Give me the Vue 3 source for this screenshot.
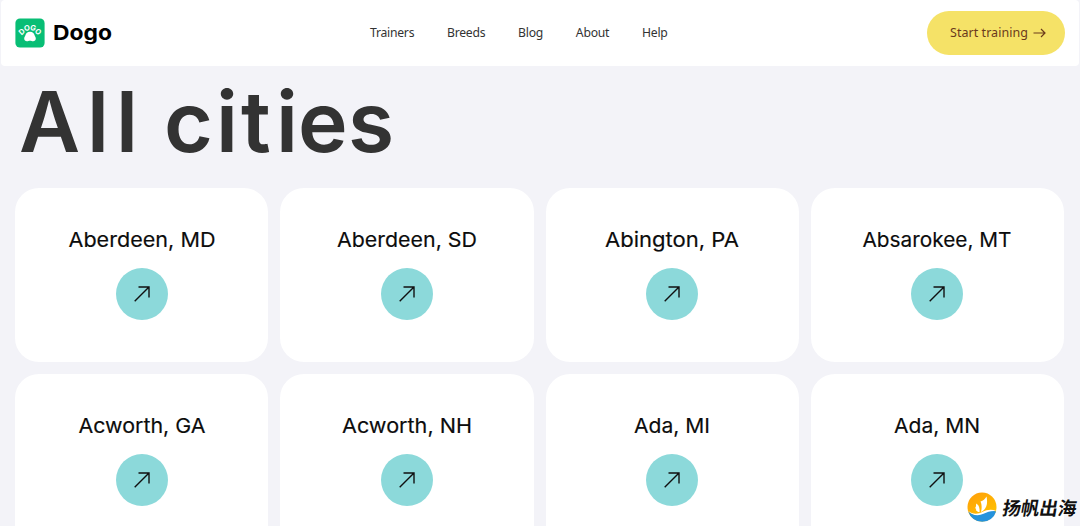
<template>
  <div class="page">
    <header class="header">
      <a class="brand">
        <svg class="brand-logo" viewBox="0 0 30 30">
          <rect x="0.4" y="0.4" width="29.2" height="29.2" rx="4.6" fill="#08be75"/>
          <g class="brand-toes">
            <text
                v-for="(toe, i) in toes"
                :key="i"
                :transform="`translate(${toe.x} ${toe.y}) rotate(${toe.angle})`"
                y="2.7"
            >{{ toe.letter }}</text>
          </g>
          <path
              d="M15 13.8c2.600 0 4 1.400 4.500 3.200c.4 1.300 1.300 2 1.300 3.500c0 1.700-1.200 2.700-2.700 2.700c-1.200 0-1.800-.5-3.100-.5s-1.900.5-3.100.5c-1.500 0-2.700-1-2.700-2.700c0-1.500.9-2.200 1.300-3.500c.5-1.800 1.900-3.200 4.500-3.200z"
              fill="#fff"
          />
        </svg>
        <svg class="brand-name" viewBox="0 0 62 30">
          <text x="0" y="22.2" textLength="59" lengthAdjust="spacingAndGlyphs">Dogo</text>
        </svg>
      </a>
      <nav class="nav">
        <a v-for="link in links" :key="link" class="nav-link">{{ link }}</a>
      </nav>
      <button class="cta">
        <span>Start training</span>
        <svg class="cta-arrow" viewBox="0 0 13 10">
          <path d="M0.5 5h11.500M8 1l4 4l-4 4"/>
        </svg>
      </button>
    </header>

    <main class="content">
      <h1 class="title">
        <svg viewBox="0 0 400 107">
          <text y="71" x="4 72 101 129 149 201 226 261 283 333">All cities</text>
        </svg>
      </h1>
      <section class="grid">
        <article v-for="city in cities" :key="city.name" class="card">
          <svg class="card-name" viewBox="0 0 200 30">
            <text
                x="100"
                y="22.3"
                :textLength="city.width"
                lengthAdjust="spacingAndGlyphs"
            >{{ city.name }}</text>
          </svg>
          <span class="card-button">
            <svg viewBox="0 0 16 16">
              <path d="M0.7 15.3L15 1M4.5 1H15v10.5"/>
            </svg>
          </span>
        </article>
      </section>
    </main>

    <div class="watermark">
      <svg class="watermark-logo" viewBox="0 0 30 30">
        <defs>
          <linearGradient id="sun" x1="0" y1="0" x2="0.6" y2="1">
            <stop offset="0" stop-color="#ff9d0a"/>
            <stop offset="1" stop-color="#ffc400"/>
          </linearGradient>
        </defs>
        <circle cx="15" cy="15" r="14.500" fill="url(#sun)"/>
        <path d="M1.3 19.500c5 4 9.500 4 14.500 1.500c4.500-2.200 8.700-3.200 13.300-1.500a14.500 14.500 0 0 1-27.800 0z" fill="#2492dc"/>
        <path d="M.8 18.500c4.700 4 9.700 4 14.500 1.500c5-2.400 9-3 14-1c-5.300-.5-8.800 .8-12.800 2.800c-5.500 2.700-12 1.500-15.700-3.300z" fill="#fff"/>
        <path d="M19.500 4.500c1.500 7 .3 12.500-5.500 15.500c1-4 .8-8-.5-10.500c2.800-.8 4.500-2.500 6-5z" fill="#fff"/>
        <path d="M9 11.500c2.700 1 4 4.500 3.500 8.800c-1.500-.3-2.800-1-3.800-2.300c.8-1 .5-1.500-.7-1.800c1-1.200 1.300-2.700 1-4.700z" fill="#fff"/>
      </svg>
      <span class="watermark-text">扬帆出海</span>
    </div>
  </div>
</template>

<script setup>

const links = ['Trainers', 'Breeds', 'Blog', 'About', 'Help']

// letters of the logo placed as the toes of the paw
const toes = [
  {letter: 'D', x: 6.7, y: 13.6, angle: -42},
  {letter: 'O', x: 11.9, y: 9.9, angle: -14},
  {letter: 'G', x: 18.1, y: 9.9, angle: 14},
  {letter: 'O', x: 23.3, y: 13.6, angle: 42},
]

const cities = [
  {name: 'Aberdeen, MD', width: 147},
  {name: 'Aberdeen, SD', width: 140},
  {name: 'Abington, PA', width: 134},
  {name: 'Absarokee, MT', width: 149},
  {name: 'Acworth, GA', width: 127},
  {name: 'Acworth, NH', width: 130},
  {name: 'Ada, MI', width: 76},
  {name: 'Ada, MN', width: 86},
]

</script>

<style>
body {
  background-color: #f3f3f8;
}
</style>

<style scoped>

.page {
  position: relative;
  height: 526px;
  overflow: hidden;
  background-color: #f3f3f8;
  font-family: "Noto Sans", sans-serif;
}

.header {
  display: grid;
  grid-template-columns: 355px 1fr auto;
  align-items: center;
  height: 66px;
  margin: 0 1px;
  padding: 0 14px;
  box-sizing: border-box;
  border-radius: 4px;
  background-color: white;
}

.brand {
  display: flex;
  align-items: center;
  gap: 7.5px;
}

.brand-logo {
  width: 30px;
  height: 30px;
}

.brand-toes {
  fill: white;
  font-family: Inter, sans-serif;
  font-size: 7.5px;
  font-weight: 700;
  text-anchor: middle;
}

.brand-name {
  width: 62px;
  height: 30px;
  font-family: Inter, sans-serif;
  font-size: 20.5px;
  font-weight: 700;
}

.nav {
  display: flex;
  gap: 32.8px;
}

.nav-link {
  color: #333;
  font-size: 12.2px;
  letter-spacing: -0.25px;
  line-height: 18px;
}

.cta {
  display: flex;
  align-items: center;
  justify-content: center;
  gap: 5px;
  width: 138px;
  height: 44px;
  padding: 0 0 1px 4px;
  border: none;
  border-radius: 22px;
  background-color: #f5e267;
  color: #6b3a1c;
  font-family: inherit;
  font-size: 12.5px;
  letter-spacing: 0.05px;
}

.cta-arrow {
  width: 13px;
  height: 10px;
  fill: none;
  stroke: currentColor;
  stroke-width: 1.2;
}

.content {
  padding: 15px 16px 0 15px;
}

.title {
  height: 107px;
  margin: 0;
}

.title svg {
  display: block;
  width: 400px;
  height: 107px;
  overflow: visible;
  fill: #333;
  font-family: Inter, sans-serif;
  font-size: 84px;
  font-weight: 600;
}

.grid {
  display: grid;
  grid-template-columns: repeat(4, 1fr);
  gap: 12px;
}

.card {
  display: flex;
  flex-direction: column;
  align-items: center;
  height: 174px;
  padding-top: 37px;
  box-sizing: border-box;
  border-radius: 24px;
  background-color: white;
}

.card-name {
  width: 200px;
  height: 30px;
  fill: #0c0c0c;
  stroke: #0c0c0c;
  stroke-width: 0.15px;
  font-family: Inter, sans-serif;
  font-size: 20.5px;
  text-anchor: middle;
}

.card-button {
  display: flex;
  align-items: center;
  justify-content: center;
  width: 52px;
  height: 52px;
  margin-top: 13px;
  border-radius: 50%;
  background-color: #8cd9da;
}

.card-button svg {
  width: 16px;
  height: 16px;
  fill: none;
  stroke: #111;
  stroke-width: 1.4;
}

.watermark {
  position: absolute;
  right: 3px;
  bottom: 4px;
  display: flex;
  align-items: center;
  gap: 6px;
}

.watermark-logo {
  width: 30px;
  height: 30px;
}

.watermark-text {
  color: #111;
  font-family: "Noto Sans CJK SC", sans-serif;
  font-size: 18.5px;
  font-weight: 700;
  line-height: 30px;
  transform: skewX(-10deg);
  text-shadow: 0 0 1px white, 0 0 2px white;
}

</style>
